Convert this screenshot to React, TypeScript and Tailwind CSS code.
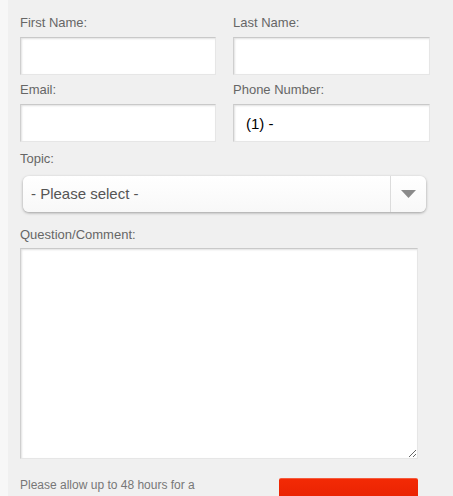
import { useState } from "react";

const inputCls =
  "block h-[38px] w-full bg-white border border-[#e6e6e6] border-t-[#c9c9c9] border-l-[#cfcfcf] shadow-[inset_1px_1px_2px_rgba(0,0,0,0.12)] outline-none px-3 text-[15px] text-black";

const Label = ({ children, className = "" }: { children: string; className?: string }) => (
  <label className={`block h-[15px] text-[13px] leading-[15px] text-[#666] ${className}`}>{children}</label>
);

const Field = ({ label, value, top }: { label: string; value?: string; top: string }) => (
  <div className={top}>
    <Label className="mb-[7px]">{label}</Label>
    <input className={inputCls} defaultValue={value} />
  </div>
);

export default function App() {
  const [topic, setTopic] = useState("");

  return (
    <div className="flex h-[496px] w-[453px] overflow-hidden bg-[#f0f0f0] font-['Liberation_Sans',Arial,sans-serif]">
      <div className="w-2 shrink-0 bg-[#f7f7f7]" />
      <form className="w-[410px] pl-3 pt-[15px]" onSubmit={(e) => e.preventDefault()}>
        <div className="grid grid-cols-[196px_197px] gap-x-[17px]">
          <Field label="First Name:" top="" />
          <Field label="Last Name:" top="" />
          <Field label="Email:" top="mt-[7px]" />
          <Field label="Phone Number:" value="(1) -" top="mt-[7px]" />
        </div>

        <Label className="mt-[9px]">Topic:</Label>
        <div className="relative ml-[3px] mt-[10px] flex h-[36px] w-[403px] items-center rounded-[6px] bg-gradient-to-b from-white to-[#f8f8f8] shadow-[0_1px_3px_rgba(0,0,0,0.35)]">
          <select
            value={topic}
            onChange={(e) => setTopic(e.target.value)}
            className="h-full flex-1 appearance-none bg-transparent pl-2 text-[15px] text-[#555] outline-none"
          >
            <option value="">- Please select -</option>
            <option value="sales">Sales</option>
            <option value="support">Support</option>
          </select>
          <div className="flex h-full w-[36px] items-center justify-center border-l border-[#dcdcdc]">
            <svg width="15" height="8" viewBox="0 0 15 8">
              <path d="M0 0h15L7.5 8z" fill="#8a8a8a" />
            </svg>
          </div>
        </div>

        <Label className="mt-[15px]">Question/Comment:</Label>
        <textarea className="mt-[6px] block h-[211px] w-[398px] bg-white border border-[#e6e6e6] border-t-[#c9c9c9] border-l-[#cfcfcf] shadow-[inset_1px_1px_2px_rgba(0,0,0,0.12)] outline-none p-2 text-[14px]" />

        <div className="mt-[19px] flex items-start">
          <p className="w-[200px] text-[12px] leading-[14px] text-[#777]">
            Please allow up to 48 hours for a response.
          </p>
          <button
            type="submit"
            className="ml-[60px] h-[40px] w-[140px] rounded-t-[2px] border-t border-[#f55a3c] bg-gradient-to-b from-[#f32a05] to-[#e01800] text-[15px] font-bold text-white"
          >
            <span className="invisible">Submit</span>
          </button>
        </div>
      </form>
    </div>
  );
}
